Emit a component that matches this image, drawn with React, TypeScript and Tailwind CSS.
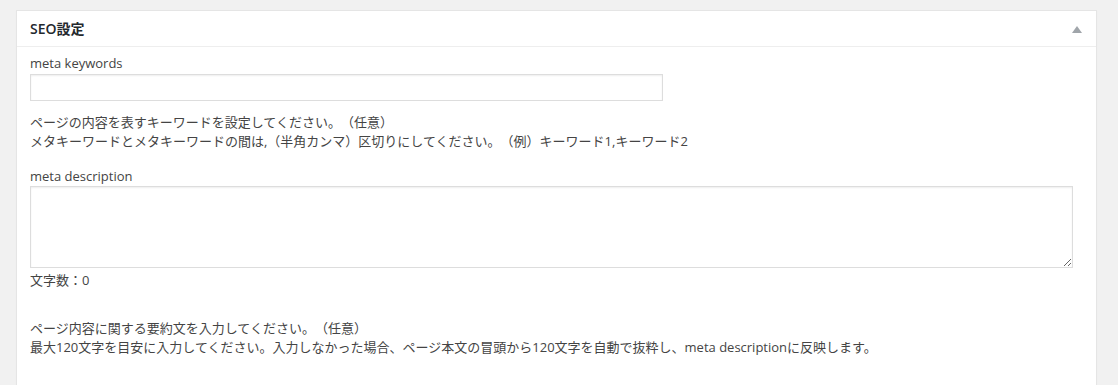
export default function App() {
  return (
    <div
      className="h-[385px] w-[1118px] overflow-hidden bg-[#f1f1f1] pt-[10px] pl-4 text-[13px] leading-[19.5px] text-[#444] [text-spacing-trim:space-all]"
      style={{ fontFamily: '"Open Sans", "Noto Sans CJK JP", sans-serif' }}
    >
      <div className="h-[390px] w-[1081px] border border-[#e5e5e5] bg-white shadow-[0_1px_1px_rgba(0,0,0,0.04)]">
        <div className="flex h-[36px] items-center justify-between border-b border-[#eee] pl-[13px] pr-[14px]">
          <h2 className="text-[14px] font-semibold text-[#23282d]">SEO設定</h2>
          <svg width="10" height="7" viewBox="0 0 10 7" className="mt-[1px]">
            <polygon points="5,0 10,7 0,7" fill="#a0a5aa" />
          </svg>
        </div>

        <div className="pl-[13px] pt-[7px]">
          <div>meta keywords</div>
          <input
            type="text"
            className="block h-[27px] w-[633px] border border-[#ddd] bg-white shadow-[inset_0_1px_2px_rgba(0,0,0,0.07)] outline-none"
          />
          <p className="mt-3">
            ページの内容を表すキーワードを設定してください。（任意）
            <br />
            メタキーワードとメタキーワードの間は,（半角カンマ）区切りにしてください。（例）キーワード1,キーワード2
          </p>

          <div className="mt-[15px]">meta description</div>
          <textarea
            className="block h-[82px] w-[1043px] border border-[#ddd] bg-white shadow-[inset_0_1px_2px_rgba(0,0,0,0.07)] outline-none"
          />
          <div className="mt-[3px]">文字数：0</div>

          <p className="mt-[28px]">
            ページ内容に関する要約文を入力してください。（任意）
            <br />
            最大120文字を目安に入力してください。入力しなかった場合、ページ本文の冒頭から120文字を自動で抜粋し、meta descriptionに反映します。
          </p>
        </div>
      </div>
    </div>
  )
}
